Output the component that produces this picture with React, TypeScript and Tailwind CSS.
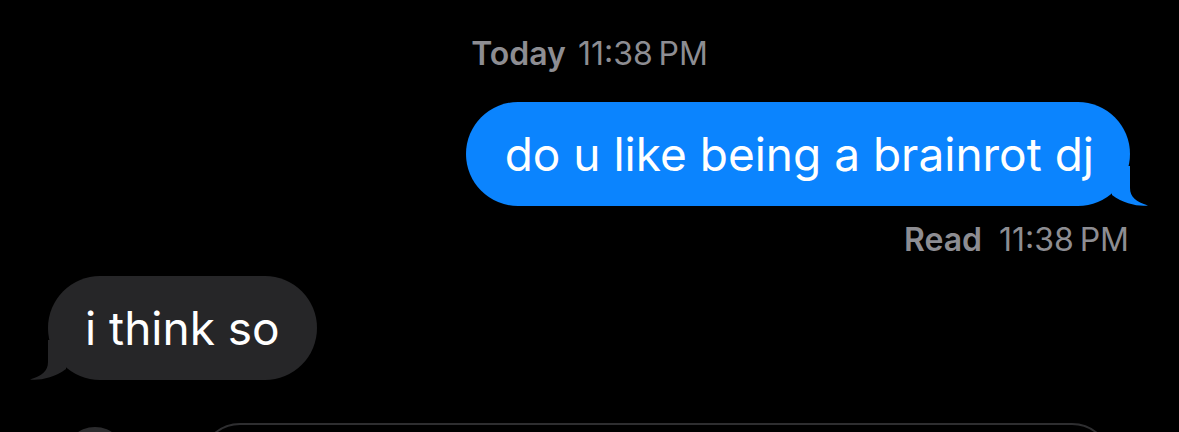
import React from "react";

const font = { fontFamily: "Inter, 'Noto Sans', sans-serif" };

function BlueTail() {
  return (
    <svg
      className="absolute bottom-0 right-[-18px]"
      width="58"
      height="40"
      viewBox="0 0 58 40"
    >
      <path
        d="M36 0 L40 0 L40 22 C40 31 46 36 58 39.5 C48 40.5 34 38 22 29 L22 0 Z"
        fill="#0b84fe"
      />
    </svg>
  );
}

function GrayTail() {
  return (
    <svg
      className="absolute bottom-0 left-[-18px]"
      width="58"
      height="40"
      viewBox="0 0 58 40"
    >
      <path
        d="M22 0 L18 0 L18 22 C18 31 12 36 0 39.5 C10 40.5 24 38 36 29 L36 0 Z"
        fill="#262628"
      />
    </svg>
  );
}

export default function App() {
  return (
    <div className="h-[432px] w-[1179px] overflow-hidden bg-black" style={font}>
      <div className="flex flex-col">
        <div className="pt-[34px] flex justify-center text-[32px] leading-[40px] text-[#8d8d92]">
          <span className="font-semibold">Today</span>
          <span className="ml-[12px]">11:38&thinsp;PM</span>
        </div>

        <div className="mt-[28px] flex justify-end pr-[49px]">
          <div className="relative flex h-[104px] items-center rounded-[52px] bg-[#0b84fe] pl-[39px] pr-[36px]">
            <BlueTail />
            <span className="relative text-[46px] leading-[52px] text-white">
              do u like being a brainrot dj
            </span>
          </div>
        </div>

        <div className="mt-[16px] flex justify-end pr-[50px] text-[32px] leading-[36px] text-[#8d8d92]">
          <span className="font-semibold">Read</span>
          <span className="ml-[17px]">11:38&thinsp;PM</span>
        </div>

        <div className="mt-[18px] flex justify-start pl-[48px]">
          <div className="relative flex h-[104px] items-center rounded-[52px] bg-[#262628] px-[37px]">
            <GrayTail />
            <span className="relative text-[46px] leading-[52px] text-white">
              i think so
            </span>
          </div>
        </div>

        <div className="mt-[43px] flex items-start">
          <div className="ml-[64px] mt-[4px] h-[62px] w-[62px] shrink-0 rounded-full bg-[#2c2c2e]" />
          <div className="ml-[74px] h-[80px] w-[912px] rounded-[40px] border-2 border-[#2e2e30]" />
        </div>
      </div>
    </div>
  );
}
